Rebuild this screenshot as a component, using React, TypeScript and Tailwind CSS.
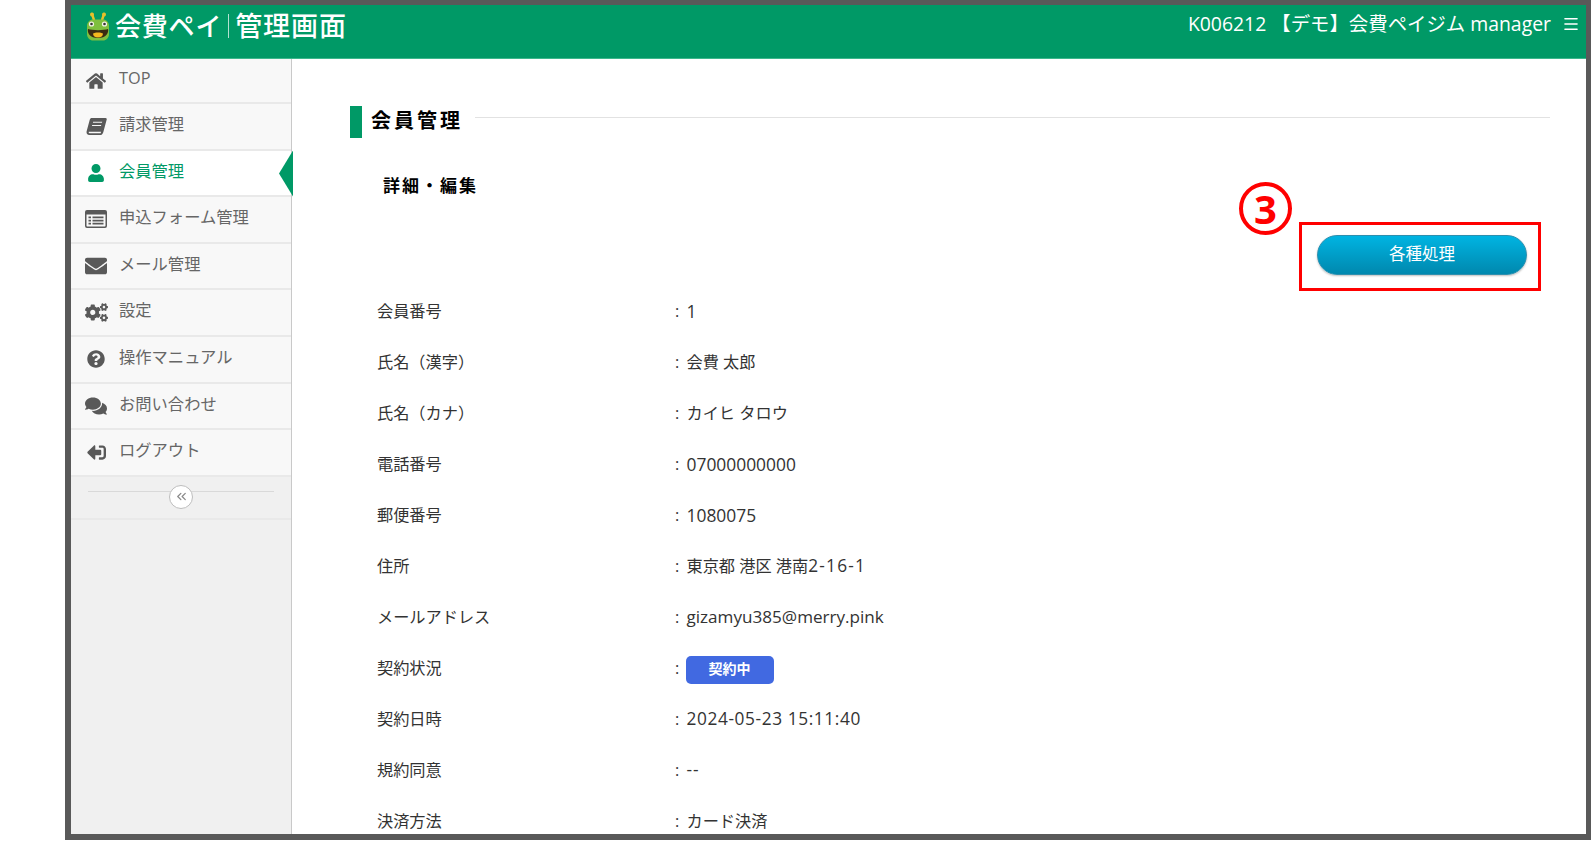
import { FaCogs, FaComments, FaEnvelope, FaHome, FaQuestionCircle, FaSignOutAlt, FaUser } from "react-icons/fa";
import { ChevronsLeft, Menu } from "lucide-react";
import type { ReactNode } from "react";

const font = "font-['Open_Sans','Noto_Sans_CJK_JP',sans-serif]";

function BookIcon() {
  return (
    <svg viewBox="0 0 22 18" className="h-[19px] w-[21px]" fill="#595959">
      <path d="M6 0h14.500c1 0 1.500.8 1.200 1.700l-3.600 13.200c-.4 1.600-1.600 3.100-3.400 3.100H3.500C1.500 18 .2 16.400.6 14.300L4 1.700C4.300.6 5 0 6 0z" />
      <path d="M7.500 4h9.500l-.3 1H7.200zM6.500 7.500H16l-.3 1H6.200z" fill="#f8f8f8" />
      <path d="M3 14.500h12.800l-.5 1.500H3.600c-.6 0-.9-.4-.8-.9z" fill="#f8f8f8" />
    </svg>
  );
}

function FormIcon() {
  return (
    <svg viewBox="0 0 22 18" className="h-[18px] w-[22px]" fill="#595959">
      <path fillRule="evenodd" d="M2 0h18a2 2 0 0 1 2 2v14a2 2 0 0 1-2 2H2a2 2 0 0 1-2-2V2a2 2 0 0 1 2-2zm-.5 4.500V15.500c0 .6.4 1 1 1h17c.6 0 1-.4 1-1V4.500z" />
      <path d="M3.500 6.500h2.500v1.700H3.500zM7.500 6.500h11v1.700h-11zM3.500 9.700h2.500v1.700H3.500zM7.500 9.700h11v1.700h-11zM3.500 12.800h2.500v1.700H3.500zM7.500 12.800h11v1.700h-11z" />
    </svg>
  );
}

function FrogLogo() {
  return (
    <svg viewBox="0 0 26 29" className="h-[29px] w-[26px]">
      <path d="M9 8 7 2M17 8l2-6" stroke="#e8c02a" strokeWidth="2.400" strokeLinecap="round" fill="none" />
      <circle cx="7" cy="2.500" r="2" fill="#e8c02a" />
      <circle cx="19" cy="2.500" r="2" fill="#e8c02a" />
      <path d="M2 14c0-4 3-6.500 6-6.500h10c3 0 6 2.500 6 6.500v8c0 4-3 6.500-6 6.500H8c-3 0-6-2.500-6-6.500z" fill="#7fbf3f" />
      <circle cx="6.500" cy="12" r="2.600" fill="#f4f4e8" />
      <circle cx="19.500" cy="12" r="2.600" fill="#f4f4e8" />
      <circle cx="6.500" cy="12" r="1.300" fill="#333" />
      <circle cx="19.500" cy="12" r="1.300" fill="#333" />
      <path d="M3 17c4 1.500 16 1.500 20 0 1 4-2 9-10 9S2 21 3 17z" fill="#3a2a12" />
      <path d="M8 21.500c2-1.500 8-1.500 10 0 0 2.500-2 4-5 4s-5-1.500-5-4z" fill="#f5b81f" />
    </svg>
  );
}

const navItems: { label: string; icon: ReactNode; active?: boolean; first?: boolean }[] = [
  { label: "TOP", icon: <FaHome size={20} />, first: true },
  { label: "請求管理", icon: <BookIcon /> },
  { label: "会員管理", icon: <FaUser size={18} />, active: true },
  { label: "申込フォーム管理", icon: <FormIcon /> },
  { label: "メール管理", icon: <FaEnvelope size={22} /> },
  { label: "設定", icon: <FaCogs size={23} /> },
  { label: "操作マニュアル", icon: <FaQuestionCircle size={18} /> },
  { label: "お問い合わせ", icon: <FaComments size={22} /> },
  { label: "ログアウト", icon: <FaSignOutAlt size={19} className="rotate-180" /> },
];

const Latin = ({ children }: { children: ReactNode }) => <span className="text-[17.400px]">{children}</span>;

const rows: [string, ReactNode][] = [
  ["会員番号", <Latin>1</Latin>],
  ["氏名（漢字）", "会費 太郎"],
  ["氏名（カナ）", "カイヒ タロウ"],
  ["電話番号", <Latin>07000000000</Latin>],
  ["郵便番号", <Latin>1080075</Latin>],
  [
    "住所",
    <>
      東京都 港区 港南<span className="text-[17.300px] tracking-[1.200px]">2-16-1</span>
    </>,
  ],
  ["メールアドレス", <span className="text-[17.100px]">gizamyu385@merry.pink</span>],
  [
    "契約状況",
    <span className="inline-flex h-[28px] w-[88px] -translate-x-[1px] translate-y-[2px] items-center justify-center rounded-[5px] bg-[#4169e1] pb-[3px] text-[14px] font-bold text-white">
      契約中
    </span>,
  ],
  ["契約日時", <span className="text-[17.300px] tracking-[0.600px]">2024-05-23 15:11:40</span>],
  ["規約同意", <span className="text-[17.300px] tracking-[1px]">--</span>],
  ["決済方法", "カード決済"],
];

function SideNav() {
  return (
    <aside className="flex w-[221px] shrink-0 flex-col border-r border-[#c9c9c9] bg-[#f0f0f0]">
      {navItems.map((item) => (
        <div
          key={item.label}
          className={
            "relative flex items-center border-b-2 border-[#e9e9e9] pl-[13px] text-[16.300px] " +
            (item.first ? "h-[45px] " : "h-[46.600px] ") +
            (item.active ? "bg-white text-[#009966]" : "bg-[#f8f8f8] text-[#666666]")
          }
        >
          <span className={"flex w-[24px] justify-center " + (item.active ? "text-[#009966]" : "text-[#595959]")}>{item.icon}</span>
          <span className="ml-[11px] -translate-y-[2px]">{item.label}</span>
          {item.active && (
            <span className="absolute -right-[2px] top-0 h-[46px] w-[14px] bg-[#009966] [clip-path:polygon(100%_0,100%_100%,0_50%)]" />
          )}
        </div>
      ))}
      <div className="relative flex h-[43px] items-center border-b-2 border-[#e9e9e9] px-[17px]">
        <div className="h-px w-full -translate-y-[6px] bg-[#d9d9d9]" />
        <span className="absolute left-[98px] top-[8px] flex h-[24px] w-[24px] items-center justify-center rounded-full border border-[#bdbdbd] bg-white text-[#888888]">
          <ChevronsLeft size={15} />
        </span>
      </div>
    </aside>
  );
}

export default function App() {
  return (
    <div className={"h-[841px] w-[1592px] overflow-hidden bg-white " + font}>
      <div className="ml-[65px] flex h-[840px] w-[1526px] flex-col border-b-[6px] border-l-[6px] border-r-[5px] border-t-[5px] border-[#595959]">
        <header className="flex h-[54px] shrink-0 items-start justify-between border-b border-[#3cb78c] bg-[#009966] pr-[6px] text-white">
          <div className="flex items-center pl-[14px] pt-[4px]">
            <FrogLogo />
            <span className="ml-[4px] text-[26px] font-medium leading-[34px] tracking-[0.800px]">会費ペイ</span>
            <span className="mx-[6px] h-[24px] w-px bg-white/70" />
            <span className="text-[27px] font-medium leading-[34px] tracking-[0.900px]">管理画面</span>
          </div>
          <div className="flex items-center pt-[6px] text-[19.400px] leading-[26px]">
            <span>K006212 【デモ】会費ペイジム manager</span>
            <Menu size={18} className="ml-[11px]" strokeWidth={2.2} />
          </div>
        </header>
        <div className="flex min-h-0 flex-1">
          <SideNav />
          <main className="min-w-0 flex-1 overflow-hidden pl-[58px] pr-[36px] pt-[47px] text-[#333333]">
            <div className="flex items-center">
              <span className="h-[32px] w-[12px] bg-[#009966]" />
              <h1 className="ml-[9px] -translate-y-[1px] text-[20px] font-bold leading-[32px] tracking-[3px] text-black">会員管理</h1>
              <span className="ml-[12px] h-px flex-1 -translate-y-[5px] bg-[#e2e2e2]" />
            </div>
            <div className="relative flex h-[147.500px] items-start justify-between pl-[33px] pr-[23px] pt-[33px]">
              <h2 className="text-[17px] font-bold leading-[30px] tracking-[2px] text-black">詳細・編集</h2>
              <button className="mt-[64px] h-[40px] w-[210px] rounded-full border border-[#2d8fae] bg-gradient-to-b from-[#00b4e2] to-[#0088ae] pb-[2px] text-[16.500px] text-white shadow-[0_1px_2px_rgba(0,0,0,0.25)]">
                各種処理
              </button>
              <span className="absolute right-[9px] top-[84px] h-[69px] w-[242px] border-[3px] border-[#ff0000]" />
              <span className="absolute right-[258px] top-[44px] flex h-[53px] w-[53px] items-center justify-center rounded-full border-[4px] border-[#ff0000] text-[40px] font-bold leading-none text-[#ff0000]">
                3
              </span>
            </div>
            <dl className="pl-[27px] text-[16.200px]">
              {rows.map(([label, value]) => (
                <div key={label} className="flex h-[51px] items-center">
                  <dt className="w-[298px] shrink-0">{label}</dt>
                  <dd className="flex items-center">
                    <span className="w-[11.500px]">:</span>
                    <span>{value}</span>
                  </dd>
                </div>
              ))}
            </dl>
          </main>
        </div>
      </div>
    </div>
  );
}
